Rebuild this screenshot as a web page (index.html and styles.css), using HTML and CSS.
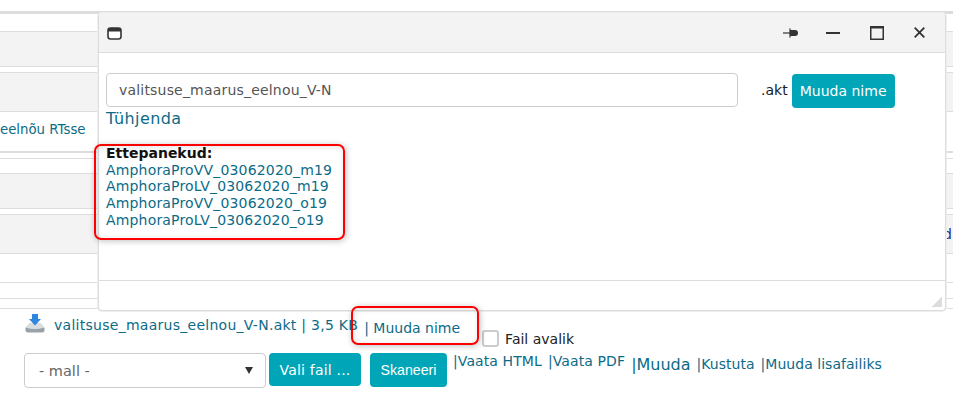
FILE: index.html
```html
<!DOCTYPE html>
<html lang="et">
<head>
<meta charset="utf-8">
<title>Muuda nime</title>
<link rel="stylesheet" href="styles.css">
</head>
<body>
<div class="page">
  <div class="rows">
    <div class="row first"></div>
    <div class="row tall shade"></div>
    <div class="row gap"></div>
    <div class="row wide shade"></div>
    <div class="row textrow"><a class="cut">eelnõu RTsse</a></div>
    <div class="row gap"></div>
    <div class="row slim"></div>
    <div class="row tall shade"></div>
    <div class="row gap"></div>
    <div class="row wide shade endrow"><a class="endlink">Lisad</a></div>
    <div class="row r29"></div>
    <div class="row r16"></div>
    <div class="row r10"></div>
  </div>

  <div class="filerow">
    <svg class="dlicon" width="20" height="19" viewBox="0 0 20 19">
      <path d="M0.500 14 L4.500 9.500 H15.500 L19.500 14 V16 Q19.500 18.500 17 18.500 H3 Q0.500 18.500 0.500 16Z" fill="#99a2a8"/>
      <path d="M0.800 13.500 L4.500 9.500 H15.500 L19.200 13.500 Q10 16.500 0.800 13.500Z" fill="#d9dde0"/>
      <path d="M7 0 H13 V5 H16 L10 11.500 L4 5 H7Z" fill="#2f86de"/>
    </svg>
    <a class="filelink">valitsuse_maarus_eelnou_V-N.akt | 3,5 KB</a>
    <a class="renamelink">| Muuda nime</a>
    <label class="publicbox"><span class="check"></span><span>Fail avalik</span></label>
  </div>

  <div class="actions">
    <div class="select"><span>- mall -</span><span class="caret"></span></div>
    <button class="btn pick">Vali fail ...</button>
    <button class="btn scan">Skaneeri</button>
    <div class="links">
      <a class="small">|Vaata HTML</a>
      <a class="small">|Vaata PDF</a>
      <a class="big">|Muuda</a>
      <a class="mid">|Kustuta</a>
      <a class="mid">|Muuda lisafailiks</a>
    </div>
  </div>

  <section class="dialog">
    <header class="dhead">
      <svg class="winicon" width="15" height="13" viewBox="0 0 15 13"><rect x="1" y="1" width="13" height="11" rx="2.500" fill="#fff" stroke="#333" stroke-width="1.600"/><rect x="1" y="1" width="13" height="3.500" fill="#333"/></svg>
      <div class="controls">
        <svg width="15" height="12" viewBox="0 0 15 12"><path d="M0 6 H7" stroke="#333" stroke-width="1.200"/><path d="M7 1.500 V10.500" stroke="#333" stroke-width="1.200"/><path d="M7 3 H12 Q15 3 15 6 Q15 9 12 9 H7Z" fill="#333"/></svg>
        <svg class="cmin" width="14" height="14" viewBox="0 0 14 14"><path d="M0 7 H14" stroke="#333" stroke-width="2"/></svg>
        <svg class="cmax" width="14" height="14" viewBox="0 0 14 14"><rect x=".75" y=".75" width="12.500" height="12.500" fill="none" stroke="#333" stroke-width="1.500"/><path d="M0 1.500 H14" stroke="#333" stroke-width="2"/></svg>
        <svg class="cclose" width="11" height="11" viewBox="0 0 11 11"><path d="M.7 .7 L10.300 10.300 M10.300 .7 L.7 10.300" stroke="#333" stroke-width="1.800"/></svg>
      </div>
    </header>
    <div class="dbody">
      <div class="namerow">
        <div class="nameinput">valitsuse_maarus_eelnou_V-N</div>
        <span class="ext">.akt</span>
        <button class="btn rename">Muuda nime</button>
      </div>
      <a class="clear">Tühjenda</a>
      <div class="suggest">
        <strong>Ettepanekud:</strong>
        <a>AmphoraProVV_03062020_m19</a>
        <a>AmphoraProLV_03062020_m19</a>
        <a>AmphoraProVV_03062020_o19</a>
        <a>AmphoraProLV_03062020_o19</a>
      </div>
    </div>
    <footer class="dfoot"><span class="grip"></span></footer>
  </section>

  <div class="mark mark-suggest"></div>
  <div class="mark mark-rename"></div>
</div>
</body>
</html>
```

FILE: styles.css
```css
* { box-sizing: border-box; }
html, body { margin: 0; padding: 0; background: #fff; }
body { font-family: "DejaVu Sans", Verdana, sans-serif; color: #1a1a2e; overflow: hidden; }
a { color: #0c6b87; text-decoration: none; }
.page { position: relative; width: 953px; height: 400px; overflow: hidden; }

.rows { padding-top: 11px; }
.row { border-bottom: 1px solid #ddd; }
.shade { background: #f3f3f3; }
.first { height: 21px; border-top: 3px solid #ddd; }
.tall { height: 35px; }
.gap { height: 6px; }
.wide { height: 39px; }
.slim { height: 15px; }
.r29 { height: 29px; }
.r16 { height: 16px; }
.r10 { height: 10px; }
.textrow { height: 41px; border-bottom-width: 2px; padding-top: 10px; font-size: 13.300px; white-space: nowrap; }
.endrow { display: flex; justify-content: flex-end; align-items: center; padding-right: 1px; }
.endlink { font-size: 14px; color: #1a2a8c; white-space: nowrap; }

.filerow { display: flex; align-items: flex-start; margin-top: 5px; padding-left: 25px; height: 39px; font-size: 14px; }
.dlicon { flex: none; }
.filelink { margin-left: 9px; margin-top: 3px; white-space: nowrap; letter-spacing: .27px; }
.renamelink { margin-left: 6px; margin-top: 6px; white-space: nowrap; }
.publicbox { display: flex; align-items: center; gap: 6px; margin-left: 22px; margin-top: 16px; color: #222; white-space: nowrap; }
.check { width: 17px; height: 17px; border: 2px solid #ccc; border-radius: 3px; background: #fff; }

.actions { display: flex; align-items: flex-start; padding-left: 24px; }
.select { width: 242px; height: 35px; border: 1px solid #ccc; border-radius: 4px; display: flex; align-items: center; justify-content: space-between; padding: 0 12px 0 14px; font-size: 14.500px; color: #666; }
.caret { width: 0; height: 0; border-left: 4px solid transparent; border-right: 4px solid transparent; border-top: 7px solid #333; }
.btn { border: 0; border-radius: 4px; background: #00a5b8; color: #fff; font-family: inherit; padding: 0; }
.pick { width: 92px; height: 33px; margin-left: 3px; font-size: 14px; letter-spacing: .2px; }
.scan { width: 77px; height: 34px; margin-left: 9px; font-family: "Liberation Sans", Arial, sans-serif; font-size: 14.200px; }
.links { display: flex; align-items: flex-start; margin-left: 6px; white-space: nowrap; }
.small { font-size: 14px; margin-right: 6px; letter-spacing: .1px; }
.big { font-size: 16px; margin-right: 6px; margin-top: 2px; }
.mid { font-size: 14px; margin-right: 6px; margin-top: 3px; letter-spacing: .03px; }

.dialog { position: absolute; left: 98px; top: 13px; width: 848px; height: 298px; border: 1px solid #ddd; border-top: 0; border-radius: 4px; background: #fff; display: flex; flex-direction: column; box-shadow: 0 0 0 1px #eee; }
.dhead { height: 40px; background: #f3f3f3; border-bottom: 1px solid #ddd; display: flex; align-items: center; justify-content: space-between; padding: 0 20px 0 8px; border-radius: 4px 4px 0 0; flex: none; }
.winicon { margin-top: 2px; }
.controls { display: flex; align-items: center; }
.cmin { margin-left: 28px; }
.cmax { margin-left: 30px; }
.cclose { margin-left: 30px; }
.dbody { flex: 1; padding: 20px 7px 0; font-size: 14px; }
.namerow { display: flex; align-items: flex-start; }
.nameinput { width: 632px; height: 34px; border: 1px solid #ccc; border-radius: 4px; padding: 0 12px; line-height: 32px; font-size: 14px; letter-spacing: .19px; color: #555; }
.ext { margin-left: 23px; margin-top: 9px; color: #1a1a2e; }
.rename { width: 103px; height: 34px; margin-left: 4px; margin-top: 1px; font-size: 14px; }
.clear { display: block; font-size: 16px; letter-spacing: .4px; line-height: 21px; }
.suggest { display: flex; flex-direction: column; margin-top: 16px; font-size: 14px; line-height: 16.700px; }
.suggest a { letter-spacing: .17px; }
.suggest strong { color: #111; }
.dfoot { height: 30px; border-top: 1px solid #ddd; position: relative; flex: none; }
.grip { position: absolute; right: 3px; bottom: 3px; width: 10px; height: 10px; background: linear-gradient(135deg, transparent 50%, #ddd 50%); }

.mark { position: absolute; border: 2px solid #f00; border-radius: 7px; box-shadow: 1px 1px 6px rgba(0, 0, 0, .25), inset 1px 1px 6px rgba(0, 0, 0, .12); }
.mark-suggest { left: 94px; top: 144px; width: 251px; height: 96px; }
.mark-rename { left: 351px; top: 306px; width: 128px; height: 39px; }
```
